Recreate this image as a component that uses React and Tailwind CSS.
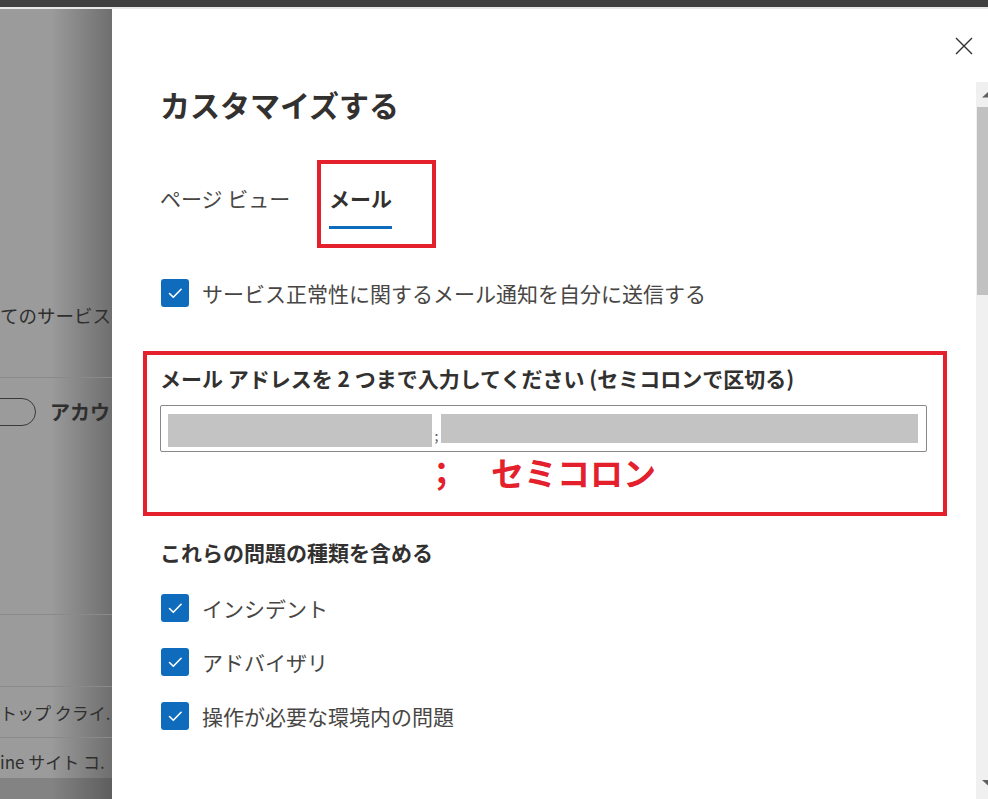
import React from 'react';

const CheckBox = () => (
  <span className="ml-px flex h-[28px] w-[28px] shrink-0 items-center justify-center rounded-[3px] bg-[#0f6cbd]">
    <svg width="28" height="28" viewBox="0 0 28 28" fill="none">
      <path d="M8.5 14.5l3.8 3.8 7.8-8" stroke="#fff" strokeWidth="1.6" strokeLinecap="round" strokeLinejoin="round" />
    </svg>
  </span>
);

const CheckRow = ({ label, className = '' }) => (
  <div className={`flex h-[28px] items-center gap-[13px] ${className}`}>
    <CheckBox />
    <span className="whitespace-nowrap text-[21px] leading-[28px] text-[#484644]">{label}</span>
  </div>
);

// dimmed page behind the side panel
const Backdrop = () => (
  <div className="flex w-[112px] shrink-0 flex-col overflow-hidden bg-linear-to-r from-[#9b9b9b] from-45% to-[#6f6f6f] text-[#2e2e2e]">
    <div className="mt-[292px] h-[28px] whitespace-nowrap text-[18.5px] leading-[28px]">てのサービス</div>
    <div className="mt-[48px] h-px bg-[#8a8a8a]" />
    <div className="mt-[20px] flex h-[28px] items-center">
      <span className="-ml-[20px] h-[28px] w-[56px] shrink-0 rounded-full border border-[#3a3a3a]" />
      <span className="ml-[14px] whitespace-nowrap text-[20px] font-bold leading-[28px]">アカウ</span>
    </div>
    <div className="mt-[188px] h-px bg-[#8a8a8a]" />
    <div className="mt-[71px] h-px bg-[#8a8a8a]" />
    <div className="mt-[12px] h-[28px] whitespace-nowrap text-[17px] leading-[28px]">トップ クライ.</div>
    <div className="mt-[10px] h-px bg-[#8a8a8a]" />
    <div className="mt-[10px] h-[28px] whitespace-nowrap text-[17px] leading-[28px]">ine サイト コ.</div>
    <div className="mt-[2px] flex-1 bg-black/15" />
  </div>
);

const ScrollBar = () => (
  <div className="mt-[73px] flex w-[12px] shrink-0 flex-col bg-[#f0f0f0]">
    <div className="flex h-[25px] items-center justify-end">
      <svg width="6" height="6" viewBox="0 0 6 6">
        <path d="M0 5.5L6 0v5.5z" fill="#606060" />
      </svg>
    </div>
    <div className="ml-px h-[188px] bg-[#c1c1c1]" />
    <div className="flex-1" />
    <div className="flex h-[24px] items-start justify-end pt-[5px]">
      <svg width="6" height="6" viewBox="0 0 6 6">
        <path d="M0 0h6v5.5z" fill="#606060" />
      </svg>
    </div>
  </div>
);

export default function App() {
  return (
    <div className="flex h-[799px] w-[988px] flex-col overflow-hidden bg-white font-['Noto_Sans_CJK_JP',sans-serif]">
      <div className="h-[7px] bg-[#404040]" />
      <div className="h-[2px] bg-[#e8e8e8]" />
      <div className="flex flex-1 overflow-hidden">
        <Backdrop />
        <div className="flex flex-1 bg-white">
          <div className="flex flex-1 flex-col pl-[48px]">
            <div className="flex justify-end pr-[3px] pt-[28px]">
              <svg width="18" height="18" viewBox="0 0 18 18">
                <path d="M1 1l16 16M17 1L1 17" stroke="#323130" strokeWidth="1.4" />
              </svg>
            </div>

            <h1 className="mt-[29px] text-[30px] font-bold leading-[40px] text-[#323130]">カスタマイズする</h1>

            <div className="mt-[36px] flex items-start">
              <div className="mt-[24px] w-[157px] whitespace-nowrap text-[21px] leading-[28px] text-[#484644]">ページ ビュー</div>
              <div className="border-4 border-[#e3202b] pb-[15px] pl-[8px] pr-[40px] pt-[20px]">
                <div className="flex flex-col">
                  <span className="text-[21px] font-bold leading-[28px] text-[#323130]">メール</span>
                  <span className="mt-[14px] h-[3px] bg-[#0f6cbd]" />
                </div>
              </div>
            </div>

            <CheckRow className="mt-[31px]" label="サービス正常性に関するメール通知を自分に送信する" />

            <div className="-ml-[17px] mt-[44px] w-[804px] border-4 border-[#e3202b] pb-[22px] pl-[13px] pr-[16px] pt-[9px]">
              <div className="whitespace-nowrap text-[21px] font-bold leading-[28px] text-[#323130]">
                メール アドレスを 2 つまで入力してください (セミコロンで区切る)
              </div>
              <div className="mt-[13px] flex h-[47px] items-start rounded-[2px] border border-[#8a8886] pl-[7px] pt-[8px]">
                <span className="h-[33px] w-[264px] bg-[#c3c3c3]" />
                <span className="w-[9px] pt-[12px] text-center text-[14px] leading-[18px] text-[#555]">;</span>
                <span className="h-[29px] w-[477px] bg-[#c3c3c3]" />
              </div>
              <div className="ml-[265px] mt-[2px] whitespace-nowrap text-[33px] font-bold leading-[36px] text-[#e3202b]">；　セミコロン</div>
            </div>

            <h2 className="mt-[22px] text-[21px] font-bold leading-[28px] text-[#323130]">これらの問題の種類を含める</h2>

            <CheckRow className="mt-[28px]" label="インシデント" />
            <CheckRow className="mt-[26px]" label="アドバイザリ" />
            <CheckRow className="mt-[26px]" label="操作が必要な環境内の問題" />
          </div>
          <ScrollBar />
        </div>
      </div>
    </div>
  );
}
